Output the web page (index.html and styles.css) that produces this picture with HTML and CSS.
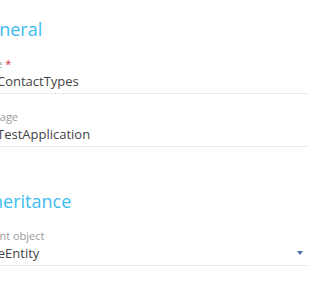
FILE: index.html
```html
<!DOCTYPE html>
<html lang="en">

<head>
    <meta charset="UTF-8" />
    <title>Object properties</title>
    <link rel="stylesheet" href="styles.css">
</head>

<body>
    <div class="panel">
        <div class="section">
            <h2 class="section-title">General</h2>
            <div class="field">
                <div class="field-label">Code <span class="required">*</span></div>
                <div class="field-value">UsrContactTypes</div>
            </div>
            <div class="field">
                <div class="field-label">Package</div>
                <div class="field-value">UsrTestApplication</div>
            </div>
        </div>

        <div class="section">
            <h2 class="section-title">Inheritance</h2>
            <div class="field">
                <div class="field-label">Parent object</div>
                <div class="field-value lookup">
                    <span>BaseEntity</span>
                    <span class="arrow"></span>
                </div>
            </div>
        </div>
    </div>
</body>

</html>
```

FILE: styles.css
```css
* {
    margin: 0;
    padding: 0;
    box-sizing: border-box;
    font-family: 'Open Sans', sans-serif;
}

body {
    background: #fff;
    color: #333;
    overflow: hidden;
}

.panel {
    margin-left: -24px;
    width: 332px;
}

.section {
    padding-top: 17px;
}

.section + .section {
    padding-top: 42px;
}

.section-title {
    font-size: 18px;
    line-height: 24px;
    font-weight: 400;
    color: #3dbcf2;
    margin-bottom: 16px;
}

.field + .field {
    margin-top: 16px;
}

.field-label {
    font-size: 11px;
    line-height: 14px;
    color: #9a9a9a;
}

.required {
    color: #d32f2f;
}

.field-value {
    font-size: 13px;
    line-height: 20px;
    padding-bottom: 2px;
    color: #444;
    border-bottom: 1px dotted #d4d4d4;
}

.lookup {
    display: flex;
    justify-content: space-between;
    align-items: center;
}

.arrow {
    width: 0;
    height: 0;
    margin-right: 5px;
    border-left: 3.5px solid transparent;
    border-right: 3.5px solid transparent;
    border-top: 4px solid #4a6fa8;
}
```
